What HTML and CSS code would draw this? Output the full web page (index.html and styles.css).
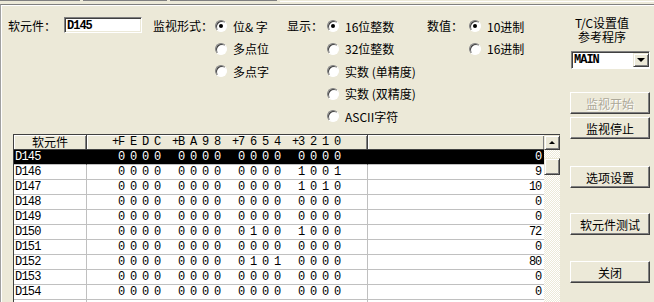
FILE: index.html
```html
<html lang="zh-CN"><head>
    <meta charset="UTF-8">
    <title>软元件批量监视</title>
    <link rel="stylesheet" href="styles.css">
</head>
<body>
    <div class="tabs"><span class="tab t1"></span><span class="tab t2"></span><span class="tab t3"></span><span class="tab-rest"></span></div>
    <div class="panel">
        <div class="main">
            <div class="controls">
                <div class="group g-dev">
                    <span class="cap">软元件：</span>
                    <span class="textbox">D145</span>
                </div>
                <div class="group g-mode">
                    <span class="cap">监视形式：</span>
                    <div class="opts">
                        <div class="opt"><span class="radio on"></span>位&amp; 字</div>
                        <div class="opt"><span class="radio"></span>多点位</div>
                        <div class="opt"><span class="radio"></span>多点字</div>
                    </div>
                </div>
                <div class="group g-disp">
                    <span class="cap">显示：</span>
                    <div class="opts">
                        <div class="opt"><span class="radio on"></span>16位整数</div>
                        <div class="opt"><span class="radio"></span>32位整数</div>
                        <div class="opt"><span class="radio"></span>实数 (单精度)</div>
                        <div class="opt"><span class="radio"></span>实数 (双精度)</div>
                        <div class="opt"><span class="radio"></span>ASCII字符</div>
                    </div>
                </div>
                <div class="group g-num">
                    <span class="cap">数值：</span>
                    <div class="opts">
                        <div class="opt"><span class="radio on"></span>10进制</div>
                        <div class="opt"><span class="radio"></span>16进制</div>
                    </div>
                </div>
            </div>

            <div class="list">
                <div class="table">
                    <div class="row head">
                        <div class="cell c-name">软元件</div>
                        <div class="cell c-bits">+F E D C  +B A 9 8  +7 6 5 4  +3 2 1 0</div>
                        <div class="cell c-val"></div>
                    </div>
                    <div class="row sel">
                        <div class="cell c-name">D145</div>
                        <div class="cell c-bits"> 0 0 0 0   0 0 0 0   0 0 0 0   0 0 0 0</div>
                        <div class="cell c-val">0</div>
                    </div>
                    <div class="row">
                        <div class="cell c-name">D146</div>
                        <div class="cell c-bits"> 0 0 0 0   0 0 0 0   0 0 0 0   1 0 0 1</div>
                        <div class="cell c-val">9</div>
                    </div>
                    <div class="row">
                        <div class="cell c-name">D147</div>
                        <div class="cell c-bits"> 0 0 0 0   0 0 0 0   0 0 0 0   1 0 1 0</div>
                        <div class="cell c-val">10</div>
                    </div>
                    <div class="row">
                        <div class="cell c-name">D148</div>
                        <div class="cell c-bits"> 0 0 0 0   0 0 0 0   0 0 0 0   0 0 0 0</div>
                        <div class="cell c-val">0</div>
                    </div>
                    <div class="row">
                        <div class="cell c-name">D149</div>
                        <div class="cell c-bits"> 0 0 0 0   0 0 0 0   0 0 0 0   0 0 0 0</div>
                        <div class="cell c-val">0</div>
                    </div>
                    <div class="row">
                        <div class="cell c-name">D150</div>
                        <div class="cell c-bits"> 0 0 0 0   0 0 0 0   0 1 0 0   1 0 0 0</div>
                        <div class="cell c-val">72</div>
                    </div>
                    <div class="row">
                        <div class="cell c-name">D151</div>
                        <div class="cell c-bits"> 0 0 0 0   0 0 0 0   0 0 0 0   0 0 0 0</div>
                        <div class="cell c-val">0</div>
                    </div>
                    <div class="row">
                        <div class="cell c-name">D152</div>
                        <div class="cell c-bits"> 0 0 0 0   0 0 0 0   0 1 0 1   0 0 0 0</div>
                        <div class="cell c-val">80</div>
                    </div>
                    <div class="row">
                        <div class="cell c-name">D153</div>
                        <div class="cell c-bits"> 0 0 0 0   0 0 0 0   0 0 0 0   0 0 0 0</div>
                        <div class="cell c-val">0</div>
                    </div>
                    <div class="row">
                        <div class="cell c-name">D154</div>
                        <div class="cell c-bits"> 0 0 0 0   0 0 0 0   0 0 0 0   0 0 0 0</div>
                        <div class="cell c-val">0</div>
                    </div>
                    <div class="row">
                        <div class="cell c-name"></div>
                        <div class="cell c-bits"></div>
                        <div class="cell c-val"></div>
                    </div>
                </div>
                <div class="vscroll">
                    <span class="sbtn"><span class="arrow-up"></span></span>
                    <span class="track-gap"></span>
                    <span class="thumb"></span>
                    <span class="track"></span>
                </div>
            </div>
        </div>

        <div class="side">
            <div class="tc-label">
                <div>T/C设置值</div>
                <div>参考程序</div>
            </div>
            <div class="combo">
                <span class="combo-text">MAIN</span>
                <span class="combo-btn"><span class="arrow-down"></span></span>
            </div>
            <button class="btn b-start" disabled>监视开始</button>
            <button class="btn b-stop">监视停止</button>
            <button class="btn b-opt">选项设置</button>
            <button class="btn b-test">软元件测试</button>
            <button class="btn b-close">关闭</button>
        </div>
    </div>
</body></html>
```

FILE: styles.css
```css
body {
    margin: 0;
    width: 654px;
    height: 302px;
    overflow: hidden;
    background-color: #ece9d8;
    font-family: "Noto Sans CJK SC", sans-serif;
    font-size: 12px;
    color: #000;
}

/* tab strip edge at the top */
.tabs {
    display: flex;
    height: 4px;
    gap: 3px;
}
.tab {
    height: 1px;
    background-color: #808080;
}
.t1 { width: 80px; }
.t2 { width: 84px; }
.t3 { width: 107px; }
.tab-rest {
    flex: 1;
    height: 1px;
    margin-top: 1px;
    background-color: #fff;
}

.panel {
    display: flex;
    height: 297px;
    border-top: 1px solid #808080;
    border-left: 1px solid #a0a0a0;
    box-shadow: inset 1px 1px #fff;
}
.main {
    width: 559px;
}

/* option groups */
.controls {
    display: flex;
    height: 129px;
    box-sizing: border-box;
    padding: 10px 0 0 7px;
}
.group {
    display: flex;
    align-items: flex-start;
}
.cap {
    line-height: 22.5px;
    white-space: nowrap;
}
.g-dev { width: 145px; }
.g-mode { width: 134px; }
.g-disp { width: 140px; }
.g-mode .opts { margin-left: 2px; }
.g-disp .opts { margin-left: 4px; }
.g-num .opts { margin-left: 6px; }

.textbox {
    margin: 2px 0 0 8px;
    width: 74px;
    height: 14px;
    padding-left: 2px;
    background-color: #fff;
    border: 1px solid;
    border-color: #808080 #fff #fff #808080;
    box-shadow: inset 1px 1px #404040, inset -1px -1px #ece9d8;
    font-family: "Liberation Mono", monospace;
    font-size: 12px;
    font-weight: bold;
    letter-spacing: -1px;
    line-height: 16px;
}

.opt {
    display: flex;
    align-items: center;
    height: 22.5px;
    white-space: pre;
}
.radio {
    position: relative;
    width: 10px;
    height: 10px;
    margin-right: 6px;
    border-radius: 50%;
    background-color: #fff;
    border: 1px solid;
    border-color: #808080 #fff #fff #808080;
    box-shadow: inset 1px 1px #404040;
}
.radio.on::after {
    content: "";
    position: absolute;
    left: 3px;
    top: 3px;
    width: 4px;
    height: 4px;
    border-radius: 50%;
    background-color: #000;
}

/* device list */
.list {
    display: flex;
    margin-left: 12px;
    width: 547px;
    height: 168px;
    border-top: 1px solid #404040;
    border-left: 1px solid #404040;
    box-sizing: border-box;
    background-color: #fff;
}
.table {
    width: 530px;
}
.row {
    display: grid;
    grid-template-columns: 73px 281px 176px;
    height: 15px;
}
.cell {
    height: 14px;
    line-height: 15px;
    border-bottom: 1px solid #c0c0c0;
    white-space: pre;
    font-family: "Liberation Mono", monospace;
    font-size: 12px;
    letter-spacing: -1.2px;
}
.c-name {
    padding-left: 1px;
    border-right: 1px solid #c0c0c0;
    letter-spacing: -0.8px;
}
.c-bits {
    padding-left: 25px;
    border-right: 1px solid #c0c0c0;
}
.c-val {
    text-align: right;
    padding-right: 3px;
}

.head .cell {
    line-height: 14px;
    background-color: #ece9d8;
    border-bottom: 1px solid #404040;
    border-right: 1px solid #404040;
    box-shadow: inset 1px 1px #fff, inset -1px 0 #808080;
}
.head .c-name {
    text-align: center;
    padding-left: 0;
    font-family: "Noto Sans CJK SC", sans-serif;
    font-size: 12px;
    letter-spacing: 0;
}
.head .c-val {
    border-right: none;
}

.sel .cell {
    background-color: #000;
    color: #fff;
    border-right-color: #000;
}

/* scrollbar */
.vscroll {
    display: flex;
    flex-direction: column;
    width: 16px;
    background: repeating-conic-gradient(#fff 0 25%, #ece9d8 0 50%) 0 0 / 2px 2px;
}
.sbtn,
.thumb {
    display: flex;
    justify-content: center;
    align-items: center;
    box-sizing: border-box;
    background-color: #ece9d8;
    border: 1px solid;
    border-color: #ece9d8 #404040 #404040 #ece9d8;
    box-shadow: inset 1px 1px #fff, inset -1px -1px #808080;
}
.sbtn { height: 15px; }
.track-gap { height: 8px; }
.thumb { height: 17px; }
.arrow-up {
    width: 0;
    height: 0;
    border-left: 3px solid transparent;
    border-right: 3px solid transparent;
    border-bottom: 3px solid #000;
}

/* right column */
.side {
    display: flex;
    flex-direction: column;
    margin-left: 10px;
    width: 80px;
}
.tc-label {
    width: 64px;
    margin-top: 11px;
    text-align: center;
    line-height: 13px;
}
.tc-label div {
    height: 13.5px;
}
.combo {
    display: flex;
    margin: 8px 0 0 1px;
    width: 79px;
    height: 18px;
    box-sizing: border-box;
    background-color: #fff;
    border: 1px solid;
    border-color: #808080 #fff #fff #808080;
    box-shadow: inset 1px 1px #404040;
}
.combo-text {
    flex: 1;
    padding: 1px 0 0 2px;
    font-family: "Liberation Mono", monospace;
    font-size: 12px;
    font-weight: bold;
    letter-spacing: -1px;
    line-height: 14px;
}
.combo-btn {
    display: flex;
    justify-content: center;
    align-items: center;
    width: 16px;
    margin: 1px 0 1px 0;
    box-sizing: border-box;
    background-color: #ece9d8;
    border: 1px solid;
    border-color: #ece9d8 #404040 #404040 #ece9d8;
    box-shadow: inset 1px 1px #fff, inset -1px -1px #808080;
}
.arrow-down {
    width: 0;
    height: 0;
    border-left: 4px solid transparent;
    border-right: 4px solid transparent;
    border-top: 4px solid #000;
}

.btn {
    width: 80px;
    height: 22px;
    padding: 0;
    background-color: #ece9d8;
    border: 1px solid;
    border-color: #fff #404040 #404040 #fff;
    box-shadow: inset -1px -1px #808080;
    font-family: "Noto Sans CJK SC", sans-serif;
    font-size: 12px;
    color: #000;
}
.btn:disabled {
    color: #aca899;
    text-shadow: 1px 1px #fff;
}
.b-start { margin-top: 23px; }
.b-stop { margin-top: 3px; }
.b-opt { margin-top: 27px; }
.b-test { margin-top: 25px; }
.b-close { margin-top: 26px; }
```
